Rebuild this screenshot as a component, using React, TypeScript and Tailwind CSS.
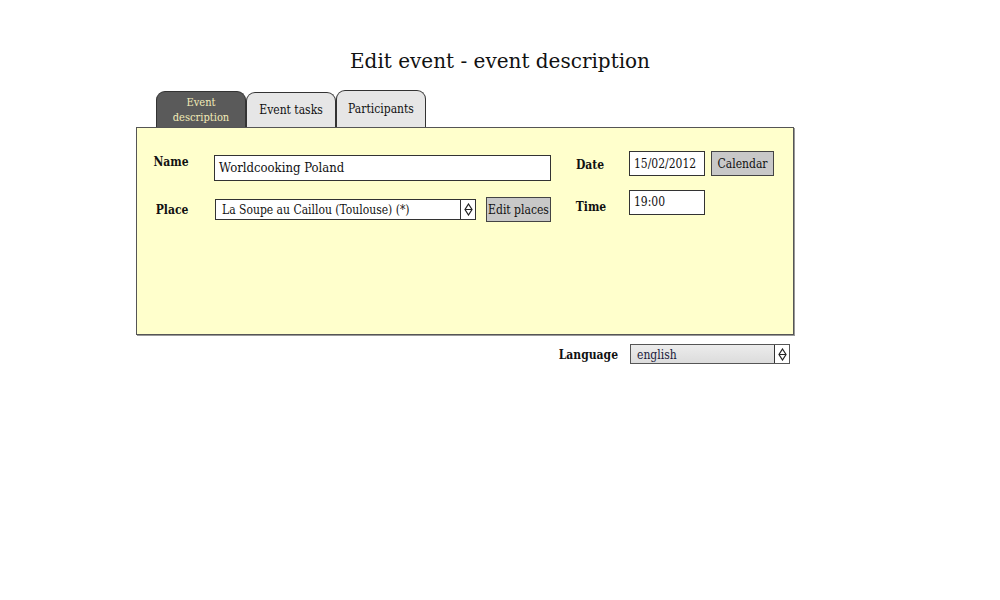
import React from "react";

const serif = { fontFamily: '"DejaVu Serif Condensed", "DejaVu Serif", serif' };

function Arrows() {
  return (
    <span className="flex h-full w-[15px] items-center justify-center border-l border-[#333] bg-white">
      <svg width="9" height="13" viewBox="0 0 9 13">
        <path d="M4.5 1 L8 6.5 L4.5 12 L1 6.5 Z M1 6.5 L8 6.5" fill="none" stroke="#222" strokeWidth="1.2" />
      </svg>
    </span>
  );
}

function Tab({ label, active, top }: { label: React.ReactNode; active?: boolean; top: string }) {
  return (
    <div
      className={`flex w-[90px] items-start justify-center rounded-t-[9px] border border-b-0 border-[#333] text-center ${top} ${
        active ? "bg-[#5a5a5a] text-[#f3ecb8] text-[11px] leading-[15px] pt-[3px]" : "bg-[#e6e6e6] text-[#111] text-[12px] pt-[8px]"
      }`}
    >
      {label}
    </div>
  );
}

export default function App() {
  return (
    <div className="h-[600px] w-[1000px] bg-white text-[#111]" style={serif}>
      <h1
        className="pt-[48px] text-center text-[20px] leading-[26px] text-[#111]"
        style={{ fontFamily: '"DejaVu Serif", serif' }}
      >
        Edit event - event description
      </h1>

      <div className="ml-[136px] mt-[17px] w-[658px]">
        <div className="flex h-[36px] items-end pl-[20px]">
          <Tab label={<>Event<br />description</>} active top="h-[36px]" />
          <Tab label="Event tasks" top="h-[35px]" />
          <Tab label="Participants" top="h-[37px] !pt-[9px]" />
        </div>

        <div className="flex h-[208px] border border-[#555] bg-[#ffffcc] shadow-[1px_1px_0_#999]">
          <div className="w-[415px] pt-[27px]">
            <div className="flex h-[26px] items-start">
              <span className="w-[68px] text-center text-[12px] font-bold leading-[14px]">Name</span>
              <div className="ml-[9px] flex h-[26px] w-[337px] items-center border border-[#333] bg-white px-[4px] text-[13px]">
                Worldcooking Poland
              </div>
            </div>
            <div className="mt-[16px] flex h-[25px] items-center">
              <span className="w-[70px] text-center text-[12px] font-bold">Place</span>
              <div className="ml-[8px] flex h-[21px] w-[261px] items-center border border-[#333] bg-white text-[12px]">
                <span className="flex-1 pl-[6px]">La Soupe au Caillou (Toulouse) (*)</span>
                <Arrows />
              </div>
              <div className="ml-[10px] flex h-[25px] w-[65px] items-center justify-center border border-[#444] bg-[#c8c8c8] text-[12px]">
                Edit places
              </div>
            </div>
          </div>

          <div className="pl-[13px] pt-[23px]">
            <div className="flex h-[25px] items-start">
              <span className="w-[50px] pt-[6px] text-center text-[12px] font-bold leading-[16px]">Date</span>
              <div className="ml-[14px] flex h-[25px] w-[76px] items-center border border-[#333] bg-white px-[4px] text-[12px]">
                15/02/2012
              </div>
              <div className="ml-[6px] flex h-[25px] w-[63px] items-center justify-center border border-[#444] bg-[#c8c8c8] text-[12px]">
                Calendar
              </div>
            </div>
            <div className="mt-[14px] flex h-[25px] items-start">
              <span className="w-[52px] pt-[9px] text-center text-[12px] font-bold leading-[16px]">Time</span>
              <div className="ml-[12px] flex h-[25px] w-[76px] items-start border border-[#333] bg-white px-[4px] pt-[2px] text-[12px]">
                19:00
              </div>
            </div>
          </div>
        </div>

        <div className="mt-[9px] flex h-[20px] items-center justify-end pr-[4px]">
          <span className="pt-[2px] text-[12px] font-bold">Language</span>
          <div className="ml-[12px] flex h-[20px] w-[160px] items-center border border-[#555] bg-gradient-to-b from-[#ececec] to-[#dcdcdc] text-[12px]">
            <span className="flex-1 pl-[6px] pt-[2px] text-[#1a1a3a]">english</span>
            <Arrows />
          </div>
        </div>
      </div>
    </div>
  );
}
